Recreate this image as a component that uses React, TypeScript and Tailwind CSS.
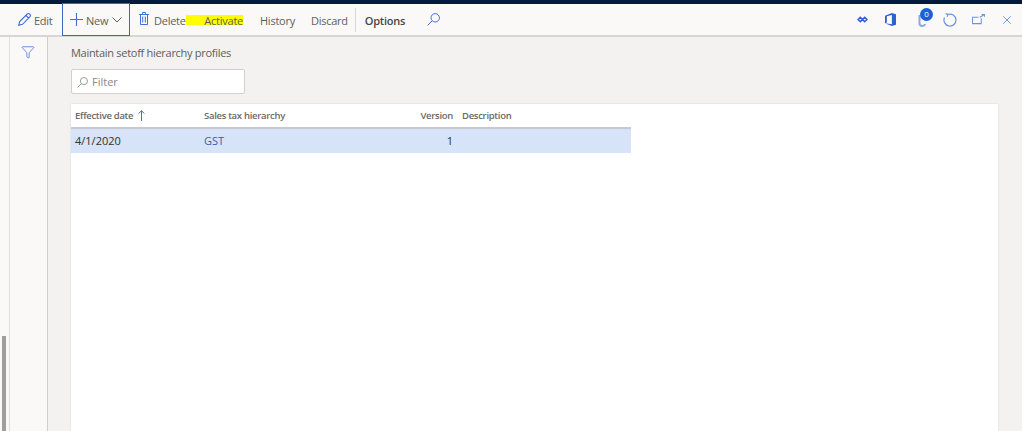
import { Filter, X } from 'lucide-react'

const font = { fontFamily: '"Open Sans", "Noto Sans", sans-serif' }

const ToolbarText = ({ label, className }: { label: string; className: string }) => (
  <span className={`mt-[3px] text-[11px] tracking-[-0.25px] text-[#605e5c] ${className}`}>{label}</span>
)

const SearchGlyph = ({ className }: { className: string }) => (
  <svg viewBox="0 0 13 13" className={className} fill="none" stroke="currentColor" strokeWidth="1">
    <circle cx="8.200" cy="4.800" r="4.200" />
    <path d="M5.200 7.800.6 12.400" />
  </svg>
)

const Toolbar = () => (
  <header className="flex h-[33px] shrink-0 items-center border-b-2 border-[#d8d6d4] bg-[#faf9f8] pl-[10px]">
    <div className="flex w-[52px] items-center gap-[3px] pl-[8px]">
      <svg viewBox="0 0 13 13" className="size-[13px] text-[#3f6fd8]" fill="none" stroke="currentColor" strokeWidth="1.100">
        <path d="M.7 12.300 1.700 8.500 9.300 1a1.500 1.500 0 0 1 2.200 0l.5.5a1.500 1.500 0 0 1 0 2.200L4.500 11.300zM8 2.500l2.500 2.500" />
      </svg>
      <ToolbarText label="Edit" className="" />
    </div>
    <div className="flex h-[33px] w-[68px] items-center border border-[#3a66c8] pl-[7px]">
      <svg viewBox="0 0 13 13" className="size-[13px] text-[#3f6fd8]" fill="none" stroke="currentColor" strokeWidth="1.100">
        <path d="M6.500 0v13M0 6.500h13" />
      </svg>
      <ToolbarText label="New" className="ml-[3px]" />
      <svg viewBox="0 0 10 6" className="ml-[4px] mt-[1px] h-[6px] w-[10px] text-[#605e5c]" fill="none" stroke="currentColor" strokeWidth="1">
        <path d="M.5.5 5 5 9.500.5" />
      </svg>
    </div>
    <div className="ml-[9px] flex w-[47px] items-center gap-[5px]">
      <svg viewBox="0 0 10 13" className="mb-[2px] h-[13px] w-[10px] text-[#3f6fd8]" fill="none" stroke="currentColor" strokeWidth="1">
        <path d="M0 2.500h10M3.500 2.500V.5h3v2M1.500 2.500v10h7v-10M3.700 4.500v6M6.300 4.500v6" />
      </svg>
      <ToolbarText label="Delete" className="" />
    </div>
    <span className="mt-[1px] flex h-[10px] w-[57px] items-center justify-end bg-[#ffff00] pt-[2px] text-[11px] tracking-[-0.25px] text-[#605e5c]">
      Activate
    </span>
    <ToolbarText label="History" className="ml-[17px]" />
    <ToolbarText label="Discard" className="ml-[16px]" />
    <div className="ml-[7px] h-[24px] w-px bg-[#d8d6d4]" />
    <span className="ml-[9px] mt-[3px] text-[11px] font-semibold tracking-[-0.25px] text-[#484644]">Options</span>
    <SearchGlyph className="ml-[22px] size-[13px] text-[#3f6fd8]" />
    <div className="ml-auto flex items-center pr-[8px]">
      <svg viewBox="0 0 12 8" className="h-[7px] w-[11px] text-[#2f62d0]" fill="none" stroke="currentColor" strokeWidth="1.800">
        <path d="M1 4 3.500 1.500 6 4 3.500 6.500zM6 4l2.500-2.500L11 4 8.500 6.500z" />
      </svg>
      <svg viewBox="0 0 12 14" className="ml-[17px] h-[13px] w-[11px] text-[#2f62d0]" fill="currentColor">
        <path d="M0 2.800 7.500 0 12 1.300v11.400L7.500 14 0 11.200l7.500 1V2.200L2 3.400v7L0 11.200z" />
      </svg>
      <div className="relative ml-[22px] h-[14px] w-[14px]">
        <svg viewBox="0 0 14 14" className="h-[14px] w-[14px] text-[#8aa8e6]" fill="none" stroke="currentColor" strokeWidth="2">
          <path d="M1.500 2v8c0 2 1 3 2.500 3s3-1 3-2" />
        </svg>
        <span className="absolute left-[2px] top-[-5px] flex size-[13px] items-center justify-center rounded-full bg-[#1f5fd6] text-[8px] text-white">
          0
        </span>
      </div>
      <svg viewBox="0 0 14 14" className="ml-[11px] size-[14px] text-[#6f92e0]" fill="none" stroke="currentColor" strokeWidth="1.200">
        <path d="M5 1.400A6 6 0 1 1 1.500 4.600M2.600.6 5 1.400 4.100 3.700" />
      </svg>
      <svg viewBox="0 0 14 12" className="ml-[15px] h-[11px] w-[13px] text-[#6f92e0]" fill="none" stroke="currentColor" strokeWidth="1.100">
        <path d="M10 4.500v6H.5v-7H7M8.500 3.500 13 .8M10.500.5H13.500V3" />
      </svg>
      <X className="ml-[15px] size-[14px] text-[#3f6fd8]" strokeWidth={1.2} />
    </div>
  </header>
)

const Grid = () => (
  <div className="ml-[23px] mr-[24px] mt-[10px] flex-1 bg-white shadow-[0_0_2px_rgba(0,0,0,0.12)]">
    <div className="flex h-[25px] w-[560px] items-center border-b-2 border-[#c8c8d0] pt-[2px] text-[9.500px] font-semibold tracking-[-0.3px] text-[#6b6967]">
      <div className="flex w-[133px] items-center gap-[5px] pl-[4px]">
        Effective date
        <svg viewBox="0 0 7 11" className="mb-[2px] h-[11px] w-[7px] text-[#3f6fd8]" fill="none" stroke="currentColor" strokeWidth="1">
          <path d="M3.500 11V.8M.6 3.500 3.500.8l2.900 2.700" />
        </svg>
      </div>
      <div className="w-[175px]">Sales tax hierarchy</div>
      <div className="w-[74px] text-right">Version</div>
      <div className="pl-[9px]">Description</div>
    </div>
    <div className="flex h-[24px] w-[560px] items-center bg-[#d6e3f9] text-[11px] text-[#323130]">
      <div className="w-[133px] pl-[4px]">4/1/2020</div>
      <div className="w-[175px] text-[#3d5fa8]">GST</div>
      <div className="w-[74px] text-right">1</div>
    </div>
  </div>
)

export default function App() {
  return (
    <div className="flex h-[431px] w-[1022px] flex-col overflow-hidden bg-[#f3f2f1]" style={font}>
      <div className="h-[4px] shrink-0 bg-[#011a3e]" />
      <Toolbar />
      <div className="flex min-h-0 flex-1">
        <div className="flex w-[10px] shrink-0 flex-col justify-end border-r border-[#e1dfdd] bg-[#faf9f8] pl-[2px]">
          <div className="h-[95px] w-[4px] bg-[#9e9e9e]" />
        </div>
        <div className="flex w-[38px] shrink-0 justify-center border-r border-[#cfcdcb] bg-[#faf9f8] pr-[2px] pt-[8px]">
          <Filter className="size-[14px] text-[#3f6fd8]" strokeWidth={1.3} />
        </div>
        <main className="flex min-w-0 flex-1 flex-col">
          <h1 className="ml-[23px] mt-[8px] text-[11px] leading-[15px] tracking-[-0.29px] text-[#605e5c]">
            Maintain setoff hierarchy profiles
          </h1>
          <div className="ml-[23px] mt-[9px] flex h-[25px] w-[174px] items-center gap-[4px] rounded-[2px] border border-[#d2d0ce] bg-white pl-[5px] pt-[1px]">
            <SearchGlyph className="size-[11px] text-[#8a8886]" />
            <span className="text-[11px] text-[#8a8886]">Filter</span>
          </div>
          <Grid />
        </main>
      </div>
    </div>
  )
}
